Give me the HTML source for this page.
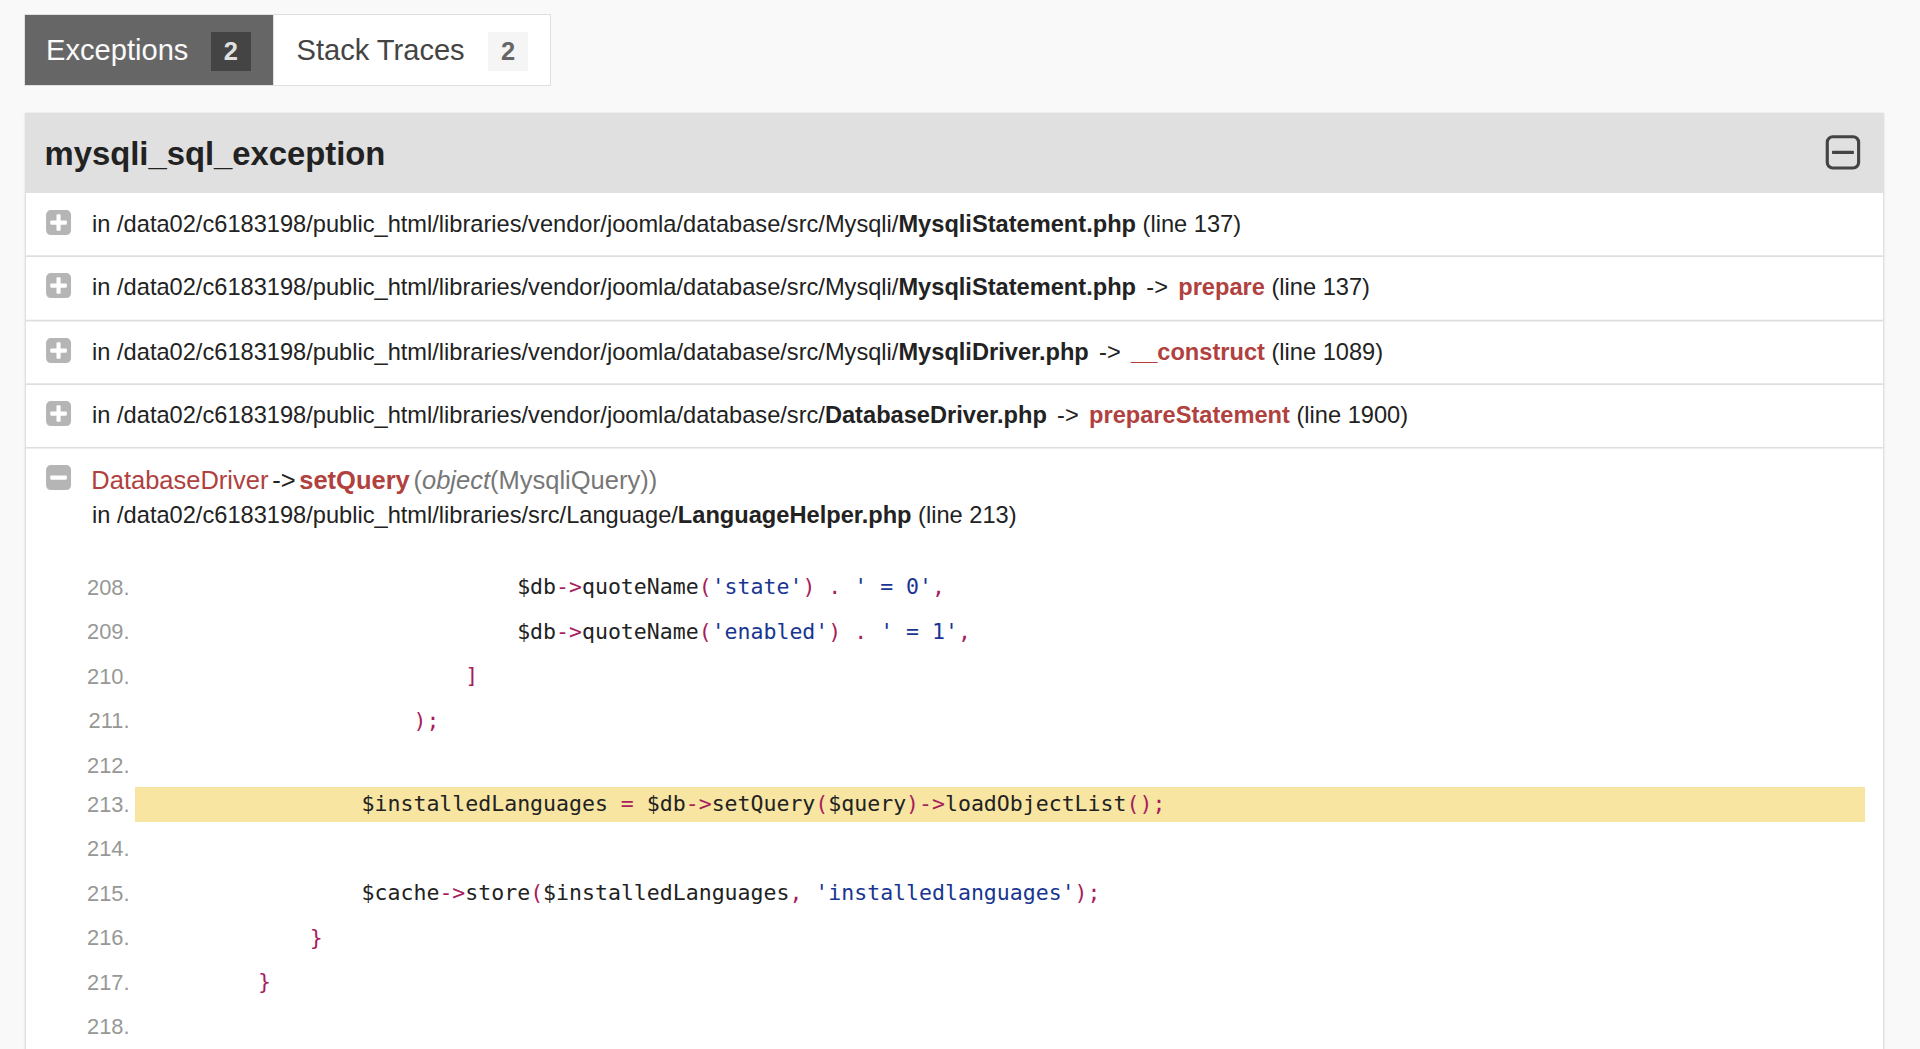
<!DOCTYPE html>
<html lang="en">
<head>
<meta charset="utf-8">
<title>mysqli_sql_exception</title>
<style>
*{box-sizing:border-box;margin:0;padding:0}
html,body{width:1920px;height:1049px;overflow:hidden;background:#f9f9f9}
body{position:relative;font-family:"Liberation Sans",Helvetica,Arial,sans-serif;color:#222;-webkit-font-smoothing:antialiased}
.abs{position:absolute;white-space:nowrap}

/* tabs */
.tab{position:absolute;top:13.5px;height:72.5px;border:1px solid #e0e0e0;font-size:29.1px;line-height:70.5px;white-space:nowrap}
.tab.active{left:23.5px;width:250px;background:#666;color:#fafafa;z-index:2}
.tab.inactive{left:272.5px;width:278.5px;background:#fff;color:#444}
.tab .lbl{position:absolute;top:0}
.badge{position:absolute;top:17px;height:39px;width:40px;font-size:25.46px;font-weight:bold;line-height:39px;text-align:center}
.tab.active .badge{background:#444;color:#e0e0e0}
.tab.inactive .badge{background:#f5f5f5;color:#666}

/* panel */
.panel{position:absolute;left:24.5px;top:112.5px;width:1859.5px;height:960px;background:#fff;border:1px solid #e0e0e0;border-top:0;box-shadow:0 0 2px rgba(128,128,128,.25)}
.head{position:absolute;left:24.5px;top:112.5px;width:1859.5px;height:80.5px;background:#e0e0e0}
.h3{left:44.5px;top:132.1px;font-size:32.8px;font-weight:bold;line-height:44px;color:#222}
.sep{position:absolute;left:26px;width:1857px}
.ico{position:absolute;left:44.4px;width:29.1px;height:29.1px;fill:#222;opacity:.33}
.path{left:92.1px;font-size:23.64px;line-height:34px;color:#222}
.path b{font-weight:bold}
.err{color:#b0413e}
.tt{padding:0 3.7px}
.l1{left:91.3px;font-size:25.5px;line-height:34px}
.args{color:#777;padding-left:3.7px}

/* code */
.ln{position:absolute;left:60px;width:69.5px;text-align:right;font-size:21.85px;line-height:35px;color:#969896;white-space:nowrap}
.cd{position:absolute;left:154.2px;margin-top:-0.2px;font-family:"DejaVu Sans Mono","Liberation Mono",monospace;font-size:21.54px;line-height:35px;color:#222;white-space:pre}
.k{color:#a71d5d}
.s{color:#183691}
.hl{position:absolute;left:135.4px;top:786.6px;width:1729.2px;height:35.1px;background:#f7e5a1}
</style>
</head>
<body>

<div class="tab active"><span class="lbl" style="left:21.6px">Exceptions</span><span class="badge" style="left:186.3px">2</span></div>
<div class="tab inactive"><span class="lbl" style="left:23px">Stack Traces</span><span class="badge" style="left:214.5px">2</span></div>

<div class="panel"></div>
<div class="head"></div>
<div class="abs h3">mysqli_sql_exception</div>
<svg class="abs" style="left:1820.8px;top:132.4px;width:43.9px;height:43.9px;fill:#444" viewBox="0 0 1792 1792"><path d="M1344 800v64q0 14-9 23t-23 9H480q-14 0-23-9t-9-23v-64q0-14 9-23t23-9h832q14 0 23 9t9 23zm128 448V416q0-66-47-113t-113-47H480q-66 0-113 47t-47 113v832q0 66 47 113t113 47h832q66 0 113-47t47-113zm128-832v832q0 119-84.500 203.500T1312 1536H480q-119 0-203.500-84.500T192 1248V416q0-119 84.500-203.500T480 128h832q119 0 203.500 84.500T1600 416z"/></svg>

<!-- row 1 -->
<svg class="ico" style="top:207.95px" viewBox="0 0 1792 1792"><path d="M1408 960V832q0-26-19-45t-45-19h-320V448q0-26-19-45t-45-19H832q-26 0-45 19t-19 45v320H448q-26 0-45 19t-19 45v128q0 26 19 45t45 19h320v320q0 26 19 45t45 19h128q26 0 45-19t19-45v-320h320q26 0 45-19t19-45zm256-544v960q0 119-84.500 203.500T1376 1664H416q-119 0-203.500-84.500T128 1376V416q0-119 84.500-203.500T416 128h960q119 0 203.500 84.500T1664 416z"/></svg>
<div class="abs path" style="top:206.5px">in /data02/c6183198/public_html/libraries/vendor/joomla/database/src/Mysqli/<b>MysqliStatement.php</b> (line 137)</div>
<div class="sep" style="top:255px;height:2px;background:linear-gradient(#e8e8e8 0 1px,#dedede 1px 2px)"></div>

<!-- row 2 -->
<svg class="ico" style="top:271.45px" viewBox="0 0 1792 1792"><path d="M1408 960V832q0-26-19-45t-45-19h-320V448q0-26-19-45t-45-19H832q-26 0-45 19t-19 45v320H448q-26 0-45 19t-19 45v128q0 26 19 45t45 19h320v320q0 26 19 45t45 19h128q26 0 45-19t19-45v-320h320q26 0 45-19t19-45zm256-544v960q0 119-84.500 203.500T1376 1664H416q-119 0-203.500-84.500T128 1376V416q0-119 84.500-203.500T416 128h960q119 0 203.500 84.500T1664 416z"/></svg>
<div class="abs path" style="top:270.4px">in /data02/c6183198/public_html/libraries/vendor/joomla/database/src/Mysqli/<b>MysqliStatement.php</b> <span class="tt">-&gt;</span> <b class="err">prepare</b> (line 137)</div>
<div class="sep" style="top:319px;height:3px;background:linear-gradient(#f6f6f6 0 1px,#dedede 1px 2px,#f0f0f0 2px 3px)"></div>

<!-- row 3 -->
<svg class="ico" style="top:335.95px" viewBox="0 0 1792 1792"><path d="M1408 960V832q0-26-19-45t-45-19h-320V448q0-26-19-45t-45-19H832q-26 0-45 19t-19 45v320H448q-26 0-45 19t-19 45v128q0 26 19 45t45 19h320v320q0 26 19 45t45 19h128q26 0 45-19t19-45v-320h320q26 0 45-19t19-45zm256-544v960q0 119-84.500 203.500T1376 1664H416q-119 0-203.500-84.500T128 1376V416q0-119 84.500-203.500T416 128h960q119 0 203.500 84.500T1664 416z"/></svg>
<div class="abs path" style="top:335px">in /data02/c6183198/public_html/libraries/vendor/joomla/database/src/Mysqli/<b>MysqliDriver.php</b> <span class="tt">-&gt;</span> <b class="err">__construct</b> (line 1089)</div>
<div class="sep" style="top:383px;height:2px;background:linear-gradient(#e8e8e8 0 1px,#dedede 1px 2px)"></div>

<!-- row 4 -->
<svg class="ico" style="top:399.45px" viewBox="0 0 1792 1792"><path d="M1408 960V832q0-26-19-45t-45-19h-320V448q0-26-19-45t-45-19H832q-26 0-45 19t-19 45v320H448q-26 0-45 19t-19 45v128q0 26 19 45t45 19h320v320q0 26 19 45t45 19h128q26 0 45-19t19-45v-320h320q26 0 45-19t19-45zm256-544v960q0 119-84.500 203.500T1376 1664H416q-119 0-203.500-84.500T128 1376V416q0-119 84.500-203.500T416 128h960q119 0 203.500 84.500T1664 416z"/></svg>
<div class="abs path" style="top:398.2px">in /data02/c6183198/public_html/libraries/vendor/joomla/database/src/<b>DatabaseDriver.php</b> <span class="tt">-&gt;</span> <b class="err">prepareStatement</b> (line 1900)</div>
<div class="sep" style="top:447px;height:2px;background:linear-gradient(#dedede 0 1px,#ededed 1px 2px)"></div>

<!-- row 5 -->
<svg class="ico" style="top:462.95px" viewBox="0 0 1792 1792"><path d="M1408 960V832q0-26-19-45t-45-19H448q-26 0-45 19t-19 45v128q0 26 19 45t45 19h896q26 0 45-19t19-45zm256-544v960q0 119-84.500 203.500T1376 1664H416q-119 0-203.500-84.500T128 1376V416q0-119 84.500-203.500T416 128h960q119 0 203.500 84.500T1664 416z"/></svg>
<div class="abs l1" style="top:463px"><span class="err">DatabaseDriver</span><span class="tt">-&gt;</span><b class="err">setQuery</b><span class="args">(<em>object</em>(MysqliQuery))</span></div>
<div class="abs path" style="top:498px">in /data02/c6183198/public_html/libraries/src/Language/<b>LanguageHelper.php</b> (line 213)</div>

<!-- code -->
<div class="hl"></div>
<div class="ln" style="top:569.5px">208.</div>
<div class="cd" style="top:569.5px">                            $db<span class="k">-&gt;</span>quoteName<span class="k">(</span><span class="s">'state'</span><span class="k">) . </span><span class="s">' = 0'</span><span class="k">,</span></div>
<div class="ln" style="top:614px">209.</div>
<div class="cd" style="top:614px">                            $db<span class="k">-&gt;</span>quoteName<span class="k">(</span><span class="s">'enabled'</span><span class="k">) . </span><span class="s">' = 1'</span><span class="k">,</span></div>
<div class="ln" style="top:658.5px">210.</div>
<div class="cd" style="top:658.5px">                        <span class="k">]</span></div>
<div class="ln" style="top:703px">211.</div>
<div class="cd" style="top:703px">                    <span class="k">);</span></div>
<div class="ln" style="top:747.5px">212.</div>
<div class="ln" style="top:786.6px">213.</div>
<div class="cd" style="top:786.6px">                $installedLanguages <span class="k">= </span>$db<span class="k">-&gt;</span>setQuery<span class="k">(</span>$query<span class="k">)-&gt;</span>loadObjectList<span class="k">();</span></div>
<div class="ln" style="top:831.2px">214.</div>
<div class="ln" style="top:875.6px">215.</div>
<div class="cd" style="top:875.6px">                $cache<span class="k">-&gt;</span>store<span class="k">(</span>$installedLanguages<span class="k">, </span><span class="s">'installedlanguages'</span><span class="k">);</span></div>
<div class="ln" style="top:920px">216.</div>
<div class="cd" style="top:920px">            <span class="k">}</span></div>
<div class="ln" style="top:964.5px">217.</div>
<div class="cd" style="top:964.5px">        <span class="k">}</span></div>
<div class="ln" style="top:1009px">218.</div>

</body>
</html>
